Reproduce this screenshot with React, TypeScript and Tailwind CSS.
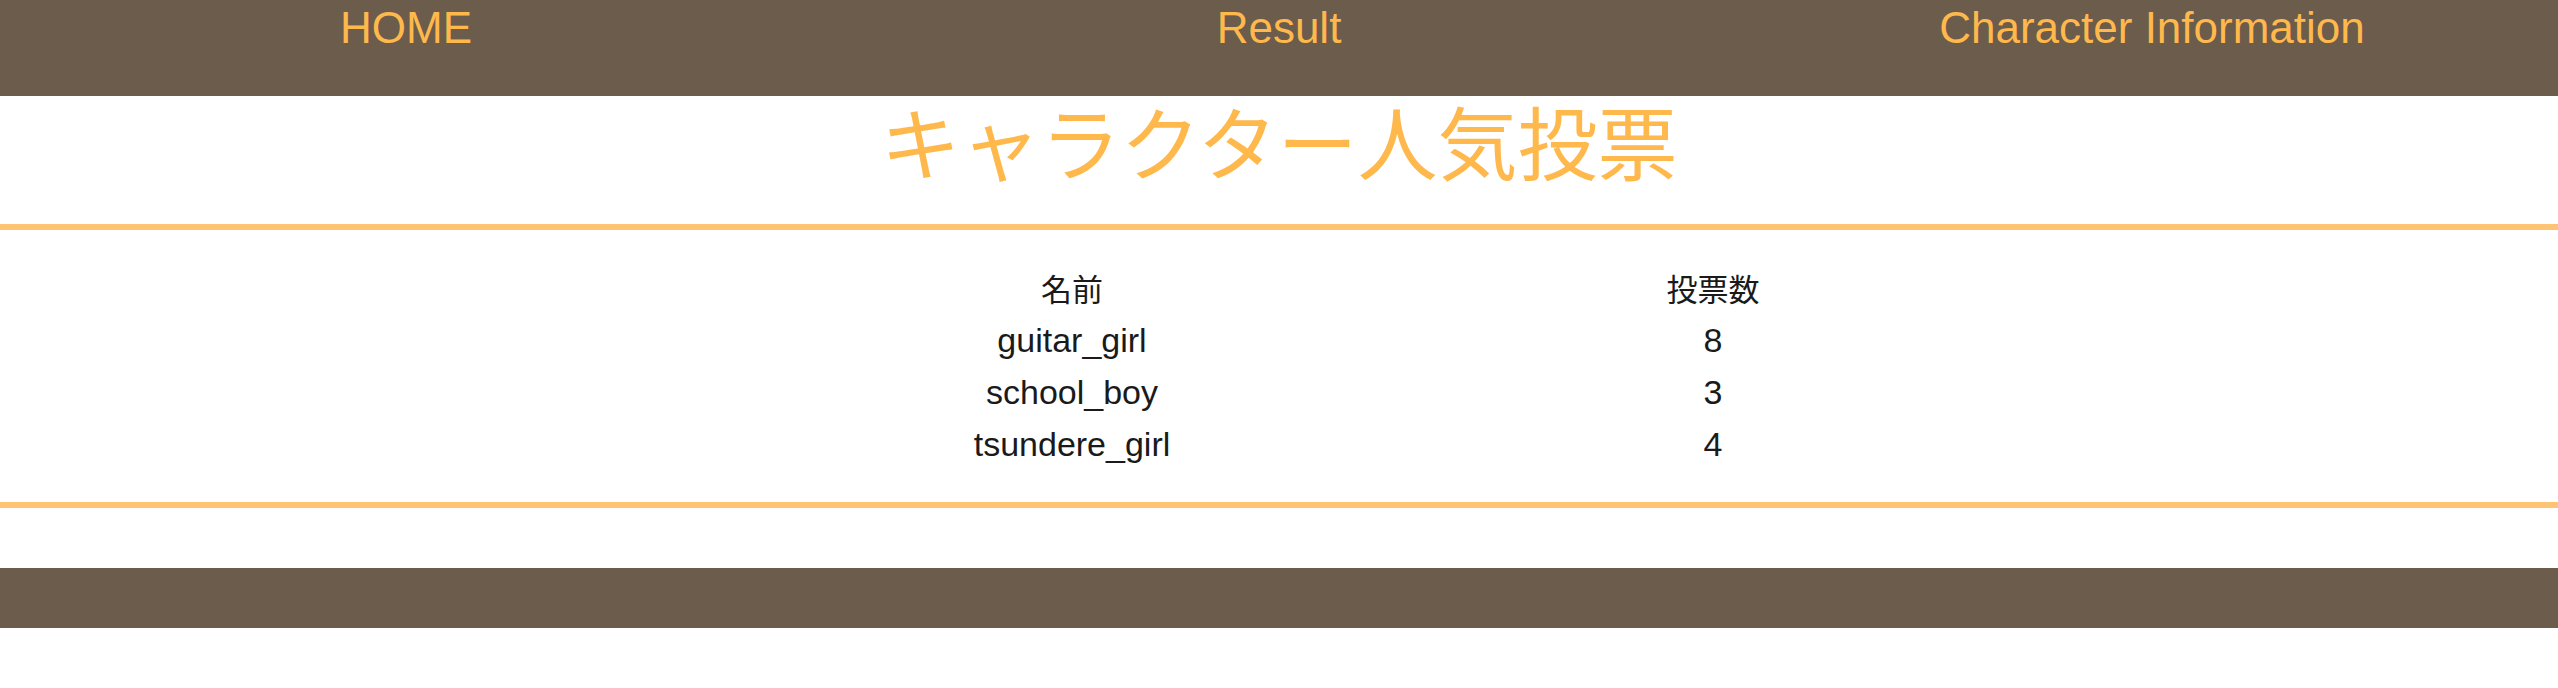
const navItems = ['HOME', 'Result', 'Character Information'];

const votes = [
  { name: 'guitar_girl', count: 8 },
  { name: 'school_boy', count: 3 },
  { name: 'tsundere_girl', count: 4 },
];

export default function App() {
  return (
    <div className="min-h-[688px] bg-white font-['Liberation_Sans','Noto_Sans_CJK_JP',sans-serif]">
      <header className="h-[96px] bg-[#6b5c4c]">
        <ul className="grid grid-cols-3 gap-x-[61px] pt-[3px]">
          {navItems.map((item) => (
            <li className="text-center text-[44px] leading-[49px] text-[#ffb84c]" key={item}>
              {item}
            </li>
          ))}
        </ul>
      </header>

      <h1 className="h-[128px] pt-[3px] text-center font-['Noto_Sans_CJK_JP',sans-serif] text-[80px] leading-none text-[#ffb84c]">
        キャラクター人気投票
      </h1>

      <section className="border-y-[6px] border-[#ffc374] py-[32px]">
        <div className="mx-auto grid w-[1282px] grid-cols-[868px_414px] text-[34px] text-[#1a1a1a]">
          <div className="flex h-[52px] items-center justify-center font-['Noto_Sans_CJK_JP',sans-serif] text-[31px]">
            名前
          </div>
          <div className="flex h-[52px] items-center justify-center font-['Noto_Sans_CJK_JP',sans-serif] text-[31px]">
            投票数
          </div>
          {votes.map(({ name, count }) => (
            <div className="contents" key={name}>
              <div className="flex h-[52px] items-center justify-center">{name}</div>
              <div className="flex h-[52px] items-center justify-center">{count}</div>
            </div>
          ))}
        </div>
      </section>

      <footer className="mt-[60px] h-[60px] bg-[#6b5c4c]" />
    </div>
  );
}
